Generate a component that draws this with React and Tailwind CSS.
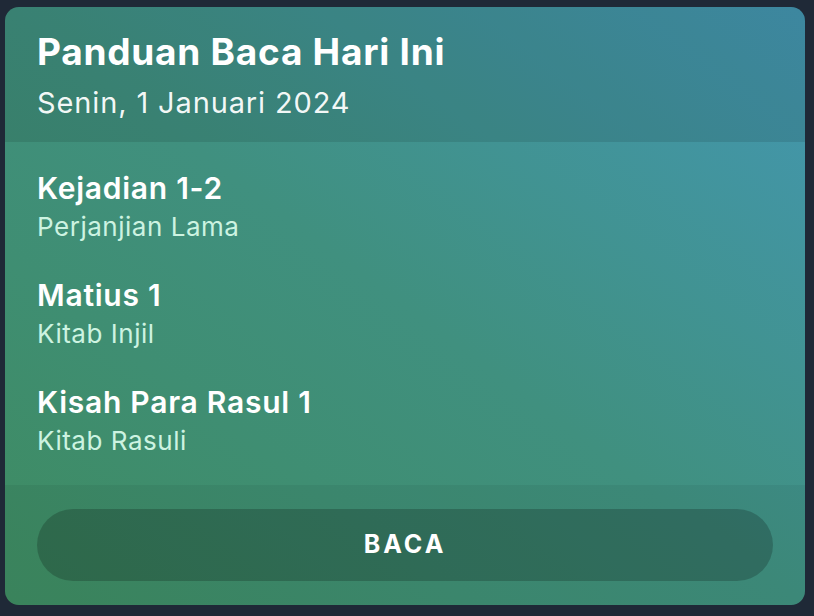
import React from 'react';

const readings = [
  { book: 'Kejadian 1-2', section: 'Perjanjian Lama' },
  { book: 'Matius 1', section: 'Kitab Injil' },
  { book: 'Kisah Para Rasul 1', section: 'Kitab Rasuli' },
];

const App = () => {
  return (
    <div className="min-h-screen bg-[#1f2937] pt-[7px] pl-[5px] pr-[9px] pb-[11px]" style={{ fontFamily: 'Inter, "Noto Sans", sans-serif' }}>
      <div className="w-[800px] h-[598px] rounded-[14px] overflow-hidden bg-linear-to-tr from-[#3e8b60] via-[#40907f] to-[#4497b2] text-white flex flex-col">
        {/* Header */}
        <div className="bg-black/10 h-[135px] px-8 pt-[22px]">
          <h1 className="text-[37px] leading-[45px] font-bold tracking-[0.02em]">Panduan Baca Hari Ini</h1>
          <p className="text-[29px] leading-[36px] mt-[11px] tracking-[0.03em] text-white/95">Senin, 1 Januari 2024</p>
        </div>

        {/* Readings */}
        <div className="flex-1 px-8 pt-[27px] flex flex-col gap-[32px]">
          {readings.map((r) => (
            <div key={r.book}>
              <div className="text-[30px] leading-[38px] font-semibold tracking-[0.025em]">{r.book}</div>
              <div className="text-[26px] leading-[34px] mt-[3px] tracking-[0.02em] text-[#cdf3e1]">{r.section}</div>
            </div>
          ))}
        </div>

        {/* Footer */}
        <div className="bg-black/5 h-[120px] px-8 pt-[24px]">
          <button className="w-full h-[72px] rounded-full bg-black/20 text-[25px] font-bold tracking-[0.12em]">
            BACA
          </button>
        </div>
      </div>
    </div>
  );
};

export default App;
